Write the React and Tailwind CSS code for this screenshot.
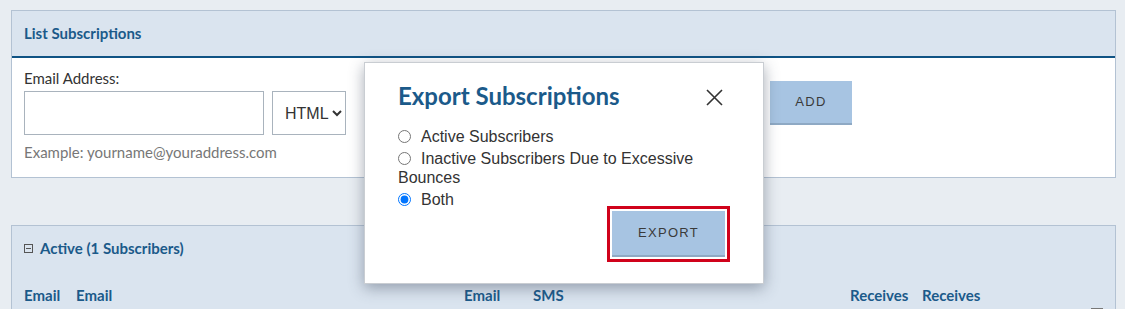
import React, { useState } from "react";

const headFont = { fontFamily: "Lato, 'Open Sans', sans-serif" };

const ExportModal = () => {
  const [choice, setChoice] = useState("both"); // which subscribers to export

  const options = [
    { value: "active", label: "Active Subscribers" },
    { value: "inactive", label: "Inactive Subscribers Due to Excessive Bounces" },
    { value: "both", label: "Both" },
  ];

  return (
    <div className="absolute left-[364px] top-[62px] w-[400px] h-[222px] bg-white border border-[#c9cdd2] shadow-[0_4px_14px_rgba(60,70,90,0.45)] px-[33px] pt-[18px]">
      <div className="flex items-start justify-between">
        <h2 className="text-[24px] font-bold text-[#1b5a8a] leading-[30px]" style={headFont}>
          Export Subscriptions
        </h2>
        <button className="mt-[8px] mr-[7px] text-[#333]">
          <svg width="17" height="17" viewBox="0 0 17 17" fill="none" stroke="#333" strokeWidth="1.6">
            <path d="M1 1 L16 16 M16 1 L1 16" />
          </svg>
        </button>
      </div>

      {/* Radio options */}
      <div className="mt-[16px] text-[16px] leading-[19px] text-[#333] font-['Liberation_Sans',Arial,sans-serif]">
        {options.map((opt) => (
          <label key={opt.value} className="block mb-[3px]">
            <input
              type="radio"
              name="export"
              value={opt.value}
              checked={choice === opt.value}
              onChange={() => setChoice(opt.value)}
              className="w-[13px] h-[13px] mr-[10px] align-[-1px] accent-[#0075ff]"
            />
            {opt.label}
          </label>
        ))}
      </div>

      {/* Export button with red focus outline */}
      <div className="flex justify-end -mt-[6px]">
        <div className="border-[3px] border-[#d0021b] p-[2px]">
          <button className="w-[113px] h-[46px] bg-[#a7c4e2] border-b-2 border-[#8ea9c4] text-[13px] tracking-[1.3px] text-[#3a3a3a] font-['Liberation_Sans',Arial,sans-serif]">
            EXPORT
          </button>
        </div>
      </div>
    </div>
  );
};

const App = () => {
  return (
    <div className="relative w-[1125px] h-[309px] overflow-hidden bg-[#e8edf2] pl-[11px] pr-[9px] pt-[10px]" style={headFont}>
      {/* List Subscriptions panel */}
      <div className="border border-[#b3c2d3] bg-white">
        <div className="h-[47px] bg-[#dae4ef] border-b-2 border-[#0f5384] flex items-center px-[12px]">
          <span className="text-[15px] font-bold text-[#1b5a8a]">List Subscriptions</span>
        </div>
        <div className="h-[119px] px-[12px] pt-[11px] flex items-start">
          <div>
            <div className="text-[15px] text-[#333] leading-[19px]">Email Address:</div>
            <div className="flex gap-[8px] mt-[3px]">
              <input type="text" className="w-[240px] h-[44px] border border-[#a9b3bd] bg-white" />
              <select className="w-[74px] h-[44px] border border-[#a9b3bd] bg-white text-[16px] text-[#333] pl-[8px] font-['Liberation_Sans',Arial,sans-serif]">
                <option>HTML</option>
                <option>Text</option>
              </select>
            </div>
            <div className="text-[15px] text-[#777] mt-[8px] leading-[19px]">Example: yourname@youraddress.com</div>
          </div>
          <button className="ml-[424px] mt-[12px] w-[82px] h-[44px] bg-[#a7c4e2] border-b-2 border-[#8ea9c4] text-[13px] tracking-[1.3px] text-[#3a3a3a] font-['Liberation_Sans',Arial,sans-serif]">
            ADD
          </button>
        </div>
      </div>

      {/* Active subscribers panel */}
      <div className="mt-[47px] border border-[#b3c2d3] bg-[#dae4ef] h-[120px] px-[12px]">
        <div className="flex items-center mt-[12px] h-[20px]">
          <span className="w-[9px] h-[9px] border border-[#555] flex items-center justify-center mr-[7px]">
            <span className="w-[5px] h-[1px] bg-[#555]" />
          </span>
          <span className="text-[15px] font-bold text-[#1b5a8a]">Active (1 Subscribers)</span>
        </div>
        <div className="relative mt-[26px] h-[20px] text-[15px] font-bold text-[#1b5a8a]">
          <span className="absolute left-0">Email</span>
          <span className="absolute left-[52px]">Email</span>
          <span className="absolute left-[440px]">Email</span>
          <span className="absolute left-[509px]">SMS</span>
          <span className="absolute left-[826px]">Receives</span>
          <span className="absolute left-[898px]">Receives</span>
          <span className="absolute left-[1067px] top-[24px] w-[12px] h-[3px] bg-[#777]" />
        </div>
      </div>

      <ExportModal />
    </div>
  );
};

export default App;
